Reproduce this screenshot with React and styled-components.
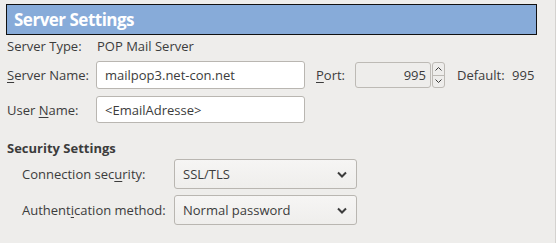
import styled, { createGlobalStyle } from 'styled-components';

const GlobalStyle = createGlobalStyle`
  html, body {
    margin: 0;
    padding: 0;
    background: #eeedeb;
  }
  body {
    font-family: 'Open Sans', 'DejaVu Sans', sans-serif;
    font-size: 13px;
    color: #3c3c3c;
  }
`;

const Page = styled.div`
  width: 556px;
  height: 243px;
  overflow: hidden;
  box-sizing: border-box;
  padding-top: 4px;
  border-right: 1px solid #d4d2cf;
`;

const Header = styled.div`
  margin-left: 6px;
  width: 531px;
  height: 31px;
  box-sizing: border-box;
  border: 1px solid #111;
  background: #87abd9;
  color: #fff;
  font-weight: 700;
  font-size: 17px;
  display: flex;
  align-items: center;
  padding-left: 7px;
  letter-spacing: -0.5px;
`;

const Form = styled.div`
  padding-left: 7px;
  display: flex;
  flex-direction: column;
`;

const Row = styled.div`
  display: grid;
  grid-template-columns: ${p => p.cols};
  align-items: center;
  height: ${p => p.h || 28}px;
  margin-top: ${p => p.mt || 0}px;
  padding-left: ${p => p.indent || 0}px;
`;

const Label = styled.span`
  white-space: nowrap;
`;

const Key = styled.span`
  text-decoration: underline;
  text-underline-offset: 2px;
`;

const Value = styled.span`
  white-space: nowrap;
`;

const TextBox = styled.div`
  height: 100%;
  box-sizing: border-box;
  border: 1px solid #b9b6b1;
  border-radius: 3px;
  background: #fff;
  display: flex;
  align-items: center;
  padding-left: 8px;
`;

const PortLabel = styled.span`
  padding-left: 11px;
`;

const Spin = styled.div`
  display: flex;
  height: 26px;
`;

const SpinField = styled.div`
  width: 76px;
  box-sizing: border-box;
  border: 1px solid #bdbab5;
  border-radius: 3px;
  display: flex;
  align-items: center;
  justify-content: flex-end;
  padding-right: 4px;
`;

const SpinButtons = styled.div`
  width: 13px;
  margin-left: 1px;
  box-sizing: border-box;
  border: 1px solid #bdbab5;
  border-radius: 3px;
  display: flex;
  flex-direction: column;
`;

const SpinHalf = styled.div`
  flex: 1;
  display: flex;
  align-items: center;
  justify-content: center;
  border-top: ${p => (p.bottom ? '1px solid #bdbab5' : 'none')};
`;

const DefaultText = styled.span`
  padding-left: 12px;
  white-space: nowrap;
  word-spacing: 4px;
`;

const Heading = styled.div`
  font-weight: 700;
  height: 20px;
  display: flex;
  align-items: center;
  margin-top: 15px;
`;

const Select = styled.div`
  height: 100%;
  box-sizing: border-box;
  border: 1px solid #b9b6b1;
  border-radius: 3px;
  background: linear-gradient(#f6f5f4, #efeeec);
  display: flex;
  align-items: center;
  justify-content: space-between;
  padding: 0 9px 0 8px;
`;

const Chevron = ({ up }) => (
  <svg width="7" height="4" viewBox="0 0 7 4">
    <path
      d={up ? 'M0.5 3.5 L3.5 0.5 L6.5 3.5' : 'M0.5 0.5 L3.5 3.5 L6.5 0.5'}
      fill="none"
      stroke="#3c3c3c"
      strokeWidth="1"
    />
  </svg>
);

const SelectArrow = () => (
  <svg width="10" height="7" viewBox="0 0 10 7">
    <path d="M1 1.5 L5 5.5 L9 1.5" fill="none" stroke="#3c3c3c" strokeWidth="2" />
  </svg>
);

const FIELD_COLS = '89px 209px 50px 90px auto';
const SELECT_COLS = '152px 183px';

export default function App() {
  return (
    <>
      <GlobalStyle />
      <Page>
        <Header>Server Settings</Header>
        <Form>
          <Row h={22} cols="90px auto">
            <Label>Server Type:</Label>
            <Value>POP Mail Server</Value>
          </Row>
          <Row mt={4} cols={FIELD_COLS}>
            <Label>
              <Key>S</Key>erver Name:
            </Label>
            <TextBox>mailpop3.net-con.net</TextBox>
            <PortLabel>
              <Key>P</Key>ort:
            </PortLabel>
            <Spin>
              <SpinField>995</SpinField>
              <SpinButtons>
                <SpinHalf>
                  <Chevron up />
                </SpinHalf>
                <SpinHalf bottom>
                  <Chevron />
                </SpinHalf>
              </SpinButtons>
            </Spin>
            <DefaultText>Default: 995</DefaultText>
          </Row>
          <Row mt={7} h={27} cols="89px 209px">
            <Label>
              User <Key>N</Key>ame:
            </Label>
            <TextBox>&lt;EmailAdresse&gt;</TextBox>
          </Row>
          <Heading>Security Settings</Heading>
          <Row h={30} mt={1} indent={15} cols={SELECT_COLS}>
            <Label>
              Connection sec<Key>u</Key>rity:
            </Label>
            <Select>
              SSL/TLS
              <SelectArrow />
            </Select>
          </Row>
          <Row h={30} mt={6} indent={15} cols={SELECT_COLS}>
            <Label>
              Authent<Key>i</Key>cation method:
            </Label>
            <Select>
              Normal password
              <SelectArrow />
            </Select>
          </Row>
        </Form>
      </Page>
    </>
  );
}
